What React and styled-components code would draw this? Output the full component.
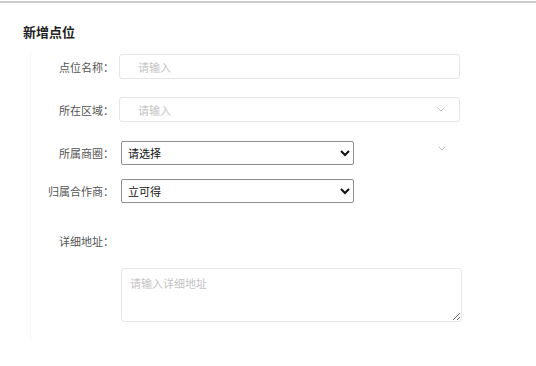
import React from 'react';
import styled, { createGlobalStyle } from 'styled-components';

const GlobalStyle = createGlobalStyle`
  html, body {
    margin: 0;
    padding: 0;
    background: #fff;
    font-family: 'Noto Sans CJK SC', 'Noto Sans', sans-serif;
  }
`;

const Page = styled.div`
  margin-top: 1px;
  border-top: 2px solid #cdcdcd;
  width: 536px;
  height: 363px;
  box-sizing: border-box;
`;

const Title = styled.h2`
  margin: 0;
  padding: 20px 0 0 23px;
  font-size: 13px;
  line-height: 18px;
  font-weight: 700;
  color: #222;
`;

const Form = styled.div`
  margin: 10px 0 0 30px;
  padding-top: 3px;
  border-left: 1px solid #f8f8f8;
  height: 290px;
  box-sizing: border-box;
`;

const Row = styled.div`
  display: flex;
  align-items: center;
  height: ${(p) => p.h || 25}px;
  margin-top: ${(p) => p.top || 0}px;
`;

const Label = styled.label`
  width: 83px;
  flex: none;
  text-align: right;
  font-size: 11px;
  color: #555;
  white-space: nowrap;
`;

const Field = styled.div`
  position: relative;
  margin-left: 5px;
  width: 341px;
  height: 25px;
  box-sizing: border-box;
  border: 1px solid #e6e6e6;
  border-radius: 3px;
  display: flex;
  align-items: center;
  padding-left: 18px;
  font-size: 11px;
  color: #c4c4c4;
`;

const Arrow = styled.svg`
  position: absolute;
  right: 14px;
  top: 50%;
  margin-top: -3px;
`;

const Select = styled.select`
  margin-left: 7px;
  width: 233px;
  height: 24px;
  font-size: 11px;
  font-family: 'Noto Sans CJK SC', sans-serif;
  color: #111;
  border: 1px solid #8e8e8e;
  border-radius: 2px;
  background: #fff;
  padding: 0 2px;
`;

const Ghost = styled.svg`
  margin-left: 84px;
  margin-top: -8px;
`;

const TextArea = styled.textarea`
  display: block;
  margin: 15px 0 0 90px;
  width: 341px;
  height: 54px;
  box-sizing: border-box;
  border: 1px solid #e6e6e6;
  border-radius: 3px;
  padding: 6px 8px;
  font-size: 11px;
  font-family: 'Noto Sans CJK SC', sans-serif;
  color: #333;
  &::placeholder {
    color: #c4c4c4;
  }
`;

const Chevron = ({ as: Comp = Arrow }) => (
  <Comp width="8" height="5" viewBox="0 0 8 5">
    <path d="M0.5 0.5 L4 4 L7.5 0.5" fill="none" stroke="#bdbdbd" strokeWidth="1" />
  </Comp>
);

export default function App() {
  return (
    <>
      <GlobalStyle />
      <Page>
        <Title>新增点位</Title>
        <Form>
          <Row>
            <Label>点位名称：</Label>
            <Field>请输入</Field>
          </Row>
          <Row top={18}>
            <Label>所在区域：</Label>
            <Field>
              请输入
              <Chevron />
            </Field>
          </Row>
          <Row top={18}>
            <Label>所属商圈：</Label>
            <Select defaultValue="">
              <option value="">请选择</option>
            </Select>
            <Chevron as={Ghost} />
          </Row>
          <Row top={13}>
            <Label>归属合作商：</Label>
            <Select defaultValue="ld">
              <option value="ld">立可得</option>
            </Select>
          </Row>
          <Row top={25}>
            <Label>详细地址：</Label>
          </Row>
          <TextArea placeholder="请输入详细地址" />
        </Form>
      </Page>
    </>
  );
}
